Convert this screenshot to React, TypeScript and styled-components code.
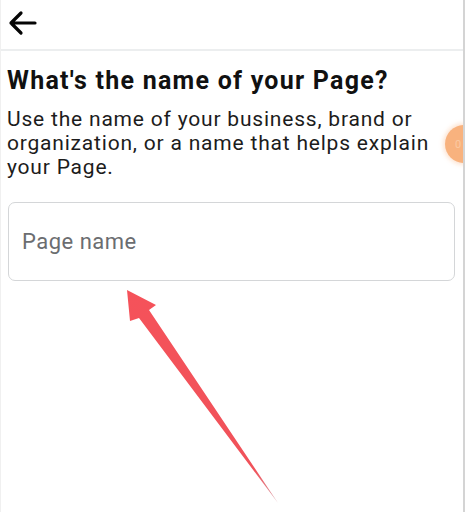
import React from "react";
import styled, { createGlobalStyle } from "styled-components";

const Global = createGlobalStyle`
  html, body { margin: 0; padding: 0; background: #ffffff; }
  body { font-family: Roboto, "Noto Sans", Arial, sans-serif; overflow: hidden; }
`;

const Screen = styled.div`
  position: relative;
  width: 465px;
  height: 512px;
  box-sizing: border-box;
  border-left: 1px solid #f0f0f0;
  border-right: 2px solid #d4d4d4;
  overflow: hidden;
  background: #fff;
`;

const Header = styled.div`
  height: 49px;
  display: flex;
  align-items: center;
  padding-left: 5px;
  border-bottom: 2px solid #eceeef;
`;

const BackButton = styled.button`
  border: 0;
  background: none;
  padding: 0;
  display: flex;
  align-items: center;
  margin-top: -4px;
`;

const Content = styled.div`
  padding: 15px 5px 0 6px;
`;

const Title = styled.h1`
  margin: 0;
  font-size: 25px;
  line-height: 30px;
  font-weight: 700;
  letter-spacing: 1.25px;
  color: #111;
`;

const Description = styled.p`
  margin: 11px 0 0 0;
  font-size: 21px;
  line-height: 24px;
  letter-spacing: 0.8px;
  color: #1c1c1c;
  width: 442px;
`;

const Field = styled.input`
  display: block;
  box-sizing: border-box;
  margin: 23px 0 0 1px;
  width: 447px;
  height: 79px;
  border: 1.5px solid #d4d6d8;
  border-radius: 7px;
  padding: 0 13px;
  font-family: Roboto, "Noto Sans", Arial, sans-serif;
  font-size: 22px;
  letter-spacing: 0.5px;
  color: #1c1e21;
  outline: none;
  &::placeholder { color: #6b6d70; }
`;

const Bubble = styled.div`
  position: absolute;
  left: 444px;
  top: 125px;
  width: 38px;
  height: 38px;
  border-radius: 50%;
  background: #f8b27e;
  box-shadow: 0 0 4px 2px rgba(248, 178, 126, 0.35);
  color: #fbc9a2;
  font-size: 11px;
  display: flex;
  align-items: center;
  padding-left: 10px;
  box-sizing: border-box;
`;

const Pointer = styled.svg`
  position: absolute;
  left: 0;
  top: 0;
  pointer-events: none;
`;

export default function App() {
  return (
    <>
      <Global />
      <Screen>
        <Header>
          <BackButton aria-label="Back">
            <svg width="32" height="28" viewBox="0 0 32 28">
              <path
                d="M29 14 H5 M15 4 L5 14 L15 24"
                fill="none"
                stroke="#050505"
                strokeWidth="3.2"
                strokeLinecap="round"
                strokeLinejoin="round"
              />
            </svg>
          </BackButton>
        </Header>
        <Content>
          <Title>What's the name of your Page?</Title>
          <Description>
            Use the name of your business, brand or organization, or a name that helps explain your Page.
          </Description>
          <Field placeholder="Page name" />
        </Content>
        <Bubble>0</Bubble>
        <Pointer width="465" height="512" viewBox="0 0 465 512">
          <defs>
            <linearGradient id="tail" x1="126" y1="290" x2="276" y2="503" gradientUnits="userSpaceOnUse">
              <stop offset="0" stopColor="#f5525a" />
              <stop offset="0.85" stopColor="#f0525a" />
              <stop offset="1" stopColor="#d9a0a8" />
            </linearGradient>
          </defs>
          <polygon
            points="126,290 155,305 148,310 277,503 138,318 129,321"
            fill="url(#tail)"
          />
        </Pointer>
      </Screen>
    </>
  );
}
